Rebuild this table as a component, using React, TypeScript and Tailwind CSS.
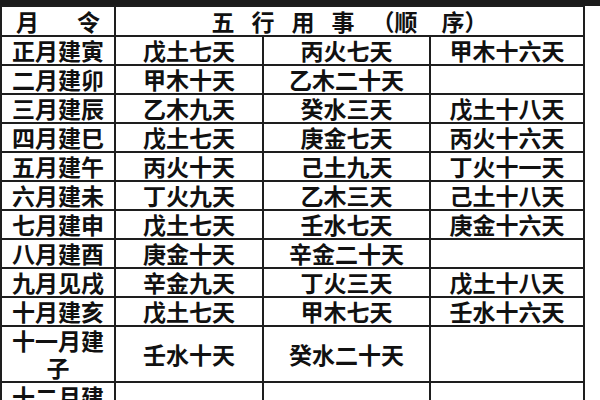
const rows: [string, string, string, string][] = [
  ["正月建寅", "戊土七天", "丙火七天", "甲木十六天"],
  ["二月建卯", "甲木十天", "乙木二十天", ""],
  ["三月建辰", "乙木九天", "癸水三天", "戊土十八天"],
  ["四月建巳", "戊土七天", "庚金七天", "丙火十六天"],
  ["五月建午", "丙火十天", "己土九天", "丁火十一天"],
  ["六月建未", "丁火九天", "乙木三天", "己土十八天"],
  ["七月建申", "戊土七天", "壬水七天", "庚金十六天"],
  ["八月建酉", "庚金十天", "辛金二十天", ""],
  ["九月见戌", "辛金九天", "丁火三天", "戊土十八天"],
  ["十月建亥", "戊土七天", "甲木七天", "壬水十六天"],
  ["十一月建子", "壬水十天", "癸水二十天", ""],
  ["十二月建丑", "癸水九天", "辛金三天", "己土十八天"],
];

const cell = "border-2 border-[#1e1e1e] text-center align-middle p-0";

export default function App() {
  return (
    <div
      className="w-[600px] h-[400px] overflow-hidden bg-white text-[#111]"
      style={{ fontFamily: '"Noto Sans CJK SC", "Noto Sans", sans-serif' }}
    >
      <div className="h-[6px] bg-[#1c1c1c]" />
      <table className="w-[583px] border-collapse table-fixed -mt-[1px] text-[23px] font-semibold leading-[27px]">
        <colgroup>
          <col className="w-[114px]" />
          <col className="w-[148px]" />
          <col className="w-[167px]" />
          <col className="w-[154px]" />
        </colgroup>
        <tbody>
          <tr className="h-[30px]">
            <td className={cell}>
              <div className="flex justify-between px-[14px]">
                <span>月</span>
                <span>令</span>
              </div>
            </td>
            <td className={cell} colSpan={3}>
              <div className="flex justify-center gap-[17px]">
                <span>五</span>
                <span>行</span>
                <span>用</span>
                <span>事</span>
                <span>（顺</span>
                <span className="ml-[7px]">序）</span>
              </div>
            </td>
          </tr>
          {rows.map((r, i) => {
            const tall = r[0].length > 4;
            return (
              <tr key={i} className={tall ? "h-[55px]" : "h-[29px]"}>
                <td className={cell}>
                  {tall ? (
                    <>
                      <div>{r[0].slice(0, 4)}</div>
                      <div>{r[0].slice(4)}</div>
                    </>
                  ) : (
                    r[0]
                  )}
                </td>
                <td className={cell}>{r[1]}</td>
                <td className={cell}>{r[2]}</td>
                <td className={cell}>{r[3]}</td>
              </tr>
            );
          })}
        </tbody>
      </table>
    </div>
  );
}
